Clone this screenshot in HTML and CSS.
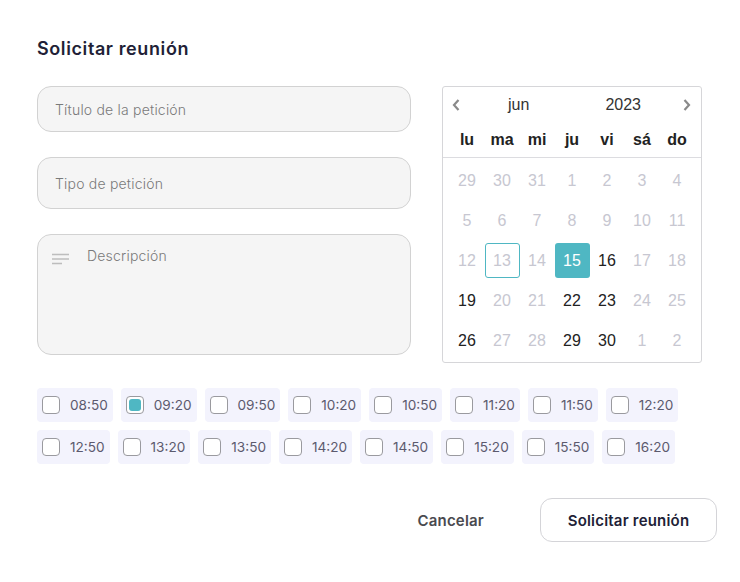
FILE: index.html
```html
<!DOCTYPE html>
<html lang="es">
<head>
<meta charset="utf-8">
<title>Solicitar reunión</title>
<link rel="stylesheet" href="styles.css">
</head>
<body>
<div class="dialog">
  <h1 class="title">Solicitar reunión</h1>
  <div class="top">
    <div class="fields">
      <div class="field field-a"><span class="ph">Título de la petición</span></div>
      <div class="field field-b"><span class="ph">Tipo de petición</span></div>
      <div class="field textarea">
        <svg class="lines" width="18" height="12" viewBox="0 0 18 12"><path d="M0 1.5h17M0 6h17M0 10.5h10" stroke="#bdbdbd" stroke-width="1.4" fill="none"/></svg>
        <span class="ph">Descripción</span>
      </div>
    </div>
    <div class="calendar">
      <div class="cal-head">
        <svg class="chev" width="10" height="14" viewBox="0 0 10 14"><path d="M7.5 2L3 7l4.5 5" stroke="#8a8a8a" stroke-width="2.2" fill="none"/></svg>
        <span class="month">jun</span>
        <span class="year">2023</span>
        <svg class="chev" width="10" height="14" viewBox="0 0 10 14"><path d="M2.5 2L7 7l-4.5 5" stroke="#8a8a8a" stroke-width="2.2" fill="none"/></svg>
      </div>
      <div class="weekdays">
        <span>lu</span><span>ma</span><span>mi</span><span>ju</span><span>vi</span><span>sá</span><span>do</span>
      </div>
      <div class="days">
        <span class="off">29</span><span class="off">30</span><span class="off">31</span><span class="off">1</span><span class="off">2</span><span class="off">3</span><span class="off">4</span>
        <span class="off">5</span><span class="off">6</span><span class="off">7</span><span class="off">8</span><span class="off">9</span><span class="off">10</span><span class="off">11</span>
        <span class="off">12</span><span class="off today">13</span><span class="off">14</span><span class="sel">15</span><span>16</span><span class="off">17</span><span class="off">18</span>
        <span>19</span><span class="off">20</span><span class="off">21</span><span>22</span><span>23</span><span class="off">24</span><span class="off">25</span>
        <span>26</span><span class="off">27</span><span class="off">28</span><span>29</span><span>30</span><span class="off">1</span><span class="off">2</span>
      </div>
    </div>
  </div>
  <div class="slots">
    <div class="slot-row">
      <label class="slot"><span class="box"></span>08:50</label>
      <label class="slot"><span class="box checked"></span>09:20</label>
      <label class="slot"><span class="box"></span>09:50</label>
      <label class="slot"><span class="box"></span>10:20</label>
      <label class="slot"><span class="box"></span>10:50</label>
      <label class="slot"><span class="box"></span>11:20</label>
      <label class="slot"><span class="box"></span>11:50</label>
      <label class="slot"><span class="box"></span>12:20</label>
    </div>
    <div class="slot-row">
      <label class="slot"><span class="box"></span>12:50</label>
      <label class="slot"><span class="box"></span>13:20</label>
      <label class="slot"><span class="box"></span>13:50</label>
      <label class="slot"><span class="box"></span>14:20</label>
      <label class="slot"><span class="box"></span>14:50</label>
      <label class="slot"><span class="box"></span>15:20</label>
      <label class="slot"><span class="box"></span>15:50</label>
      <label class="slot"><span class="box"></span>16:20</label>
    </div>
  </div>
  <div class="actions">
    <button class="btn-cancel">Cancelar</button>
    <button class="btn-primary">Solicitar reunión</button>
  </div>
</div>
</body>
</html>
```

FILE: styles.css
```css
* { box-sizing: border-box; }
html, body { margin: 0; padding: 0; background: #ffffff; }
body { font-family: Inter, "Open Sans", sans-serif; color: #1f1d33; }

.dialog { width: 740px; padding: 37px 23px 0 37px; }

.title {
  margin: 0;
  font-size: 18px;
  line-height: 24px;
  font-weight: 600;
  color: #221f37;
  letter-spacing: 0.6px;
}

.top { display: flex; gap: 31px; margin-top: 25px; align-items: flex-start; }

.fields { width: 374px; display: flex; flex-direction: column; gap: 25px; }

.field {
  background: #f5f5f5;
  border: 1px solid #d2d2d2;
  border-radius: 14px;
  display: flex;
  align-items: center;
  padding: 0 17px;
}
.field-a { height: 46px; }
.field-b { height: 52px; }
.textarea { height: 121px; align-items: flex-start; padding: 12px 14px; gap: 17px; }
.textarea .lines { margin-top: 6px; }

.ph { font-size: 14px; color: #7a7a7a; font-weight: 300; letter-spacing: 0.2px; }

.calendar {
  width: 260px;
  height: 277px;
  border: 1px solid #d6d6d9;
  border-radius: 3px;
  font-family: "Liberation Sans", Arial, sans-serif;
}

.cal-head {
  height: 36px;
  display: flex;
  align-items: center;
  padding: 0 9px 0 8px;
  font-size: 16px;
  color: #333;
}
.cal-head .month { margin-left: 47px; }
.cal-head .year { margin-left: auto; margin-right: 41px; }

.weekdays {
  height: 35px;
  display: grid;
  grid-template-columns: repeat(7, 35px);
  justify-content: center;
  align-items: center;
  border-bottom: 1px solid #dcdce0;
  font-size: 16px;
  font-weight: 700;
  color: #222;
  text-align: center;
}

.days {
  display: grid;
  grid-template-columns: repeat(7, 35px);
  grid-auto-rows: 35px;
  row-gap: 5px;
  justify-content: center;
  padding-top: 5px;
  font-size: 16px;
  color: #222;
}
.days span {
  display: flex;
  align-items: center;
  justify-content: center;
  border-radius: 3px;
}
.days .off { color: #c7c7d1; }
.days .today { border: 1px solid #4fb7c3; }
.days .sel { background: #4fb7c3; color: #fff; }

.slots {
  margin-top: 25px;
  display: flex;
  flex-direction: column;
  gap: 8px;
}
.slot-row { display: flex; gap: 8px; }
.slot {
  height: 34px;
  background: #f3f3fd;
  border-radius: 4px;
  display: flex;
  align-items: center;
  padding: 0 5px 0 5px;
  font-size: 13.6px;
  color: #5c5a6e;
  gap: 10px;
}
.box {
  width: 18px;
  height: 18px;
  border: 1px solid #9a9a9f;
  border-radius: 4px;
  background: #fff;
  display: block;
}
.box.checked {
  position: relative;
}
.box.checked::after {
  content: "";
  position: absolute;
  left: 2px; top: 2px; right: 2px; bottom: 2px;
  border-radius: 3px;
  background: #4fb7c3;
}

.actions {
  margin-top: 34px;
  display: flex;
  justify-content: flex-end;
  align-items: center;
  gap: 23px;
}
button { font-family: inherit; cursor: pointer; }
.btn-cancel {
  background: none;
  border: none;
  font-size: 15px;
  font-weight: 600;
  color: #4a4a4f;
  padding: 0 33px 0 0;
  letter-spacing: 0.2px;
}
.btn-primary {
  width: 177px;
  height: 44px;
  border: 1px solid #d4d4d8;
  border-radius: 12px;
  background: #fff;
  font-size: 15px;
  font-weight: 600;
  color: #221f37;
  letter-spacing: 0.2px;
}
```
